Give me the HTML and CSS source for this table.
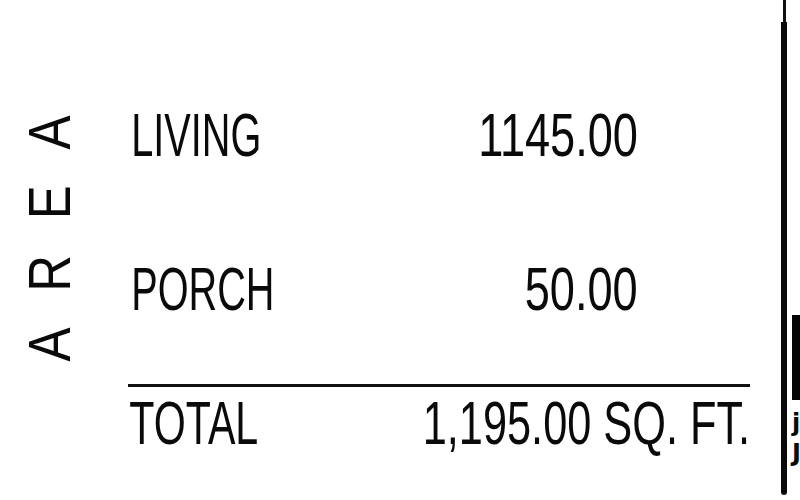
FILE: index.html
```html
<!DOCTYPE html>
<html>
<head>
<meta charset="utf-8">
<link rel="stylesheet" href="styles.css">
</head>
<body>
<div class="page">
  <div class="side"><span class="side-label">AREA</span></div>
  <div class="sheet">
    <div class="row first">
      <span class="label">LIVING</span>
      <span class="value">1145.00</span>
    </div>
    <div class="row second">
      <span class="label">PORCH</span>
      <span class="value">50.00</span>
    </div>
    <div class="rule"></div>
    <div class="row total">
      <span class="label total-label">TOTAL</span>
      <span class="value total-value">1,195.00 SQ. FT.</span>
    </div>
  </div>
  <div class="edge">
    <div class="edge-thin"></div>
    <div class="edge-thick"></div>
  </div>
  <div class="neighbor">
    <div class="neighbor-block"></div>
    <div class="neighbor-text">j<br>J</div>
  </div>
</div>
</body>
</html>
```
FILE: styles.css
```css
html, body {
  margin: 0;
  padding: 0;
  background: #fff;
}
body {
  width: 800px;
  height: 500px;
  overflow: hidden;
  font-family: "Liberation Sans", Arial, sans-serif;
  color: #0a0a0a;
}
.page {
  display: flex;
  width: 800px;
  height: 500px;
}
.side {
  flex: none;
  width: 109px;
  padding-left: 19px;
  display: flex;
  align-items: center;
  padding-bottom: 58px;
  box-sizing: content-box;
}
.side-label {
  writing-mode: vertical-rl;
  transform: rotate(180deg) scaleY(0.85);
  font-size: 60px;
  line-height: 61px;
  letter-spacing: 42px;
}
.sheet {
  width: 653px;
  flex: none;
  padding-top: 105px;
  display: flex;
  flex-direction: column;
}
.row {
  display: flex;
  font-size: 61px;
  line-height: 61px;
  height: 61px;
  white-space: nowrap;
}
.row.second {
  margin-top: 93px;
}
.label {
  flex: 1 1 0;
  min-width: 0;
  padding-left: 5px;
  transform: scaleX(0.65);
  transform-origin: left center;
}
.value {
  flex: none;
  margin-right: 143px;
  transform: scaleX(0.74);
  transform-origin: right center;
}
.rule {
  margin-top: 64px;
  width: 622px;
  height: 3px;
  background: #111;
}
.row.total {
  margin-top: 6px;
  width: 622px;
}
.total-label {
  padding-left: 2px;
  transform: scaleX(0.675);
}
.total-value {
  margin-right: 0;
  transform: scaleX(0.71);
}
.edge {
  width: 6px;
  flex: none;
  display: flex;
  flex-direction: column;
  align-items: center;
}
.edge-thin {
  width: 3px;
  height: 22px;
  background: #111;
}
.edge-thick {
  width: 6px;
  height: 473px;
  background: #0a0a0a;
  border-radius: 0 0 3px 3px;
}
.neighbor {
  margin-left: 5px;
  flex: none;
  width: 8px;
  padding-top: 315px;
}
.neighbor-block {
  width: 8px;
  height: 85px;
  background: #050505;
}
.neighbor-text {
  font-family: "DejaVu Sans", sans-serif;
  font-weight: bold;
  font-size: 24px;
  line-height: 30px;
  margin-top: 8px;
}
```
